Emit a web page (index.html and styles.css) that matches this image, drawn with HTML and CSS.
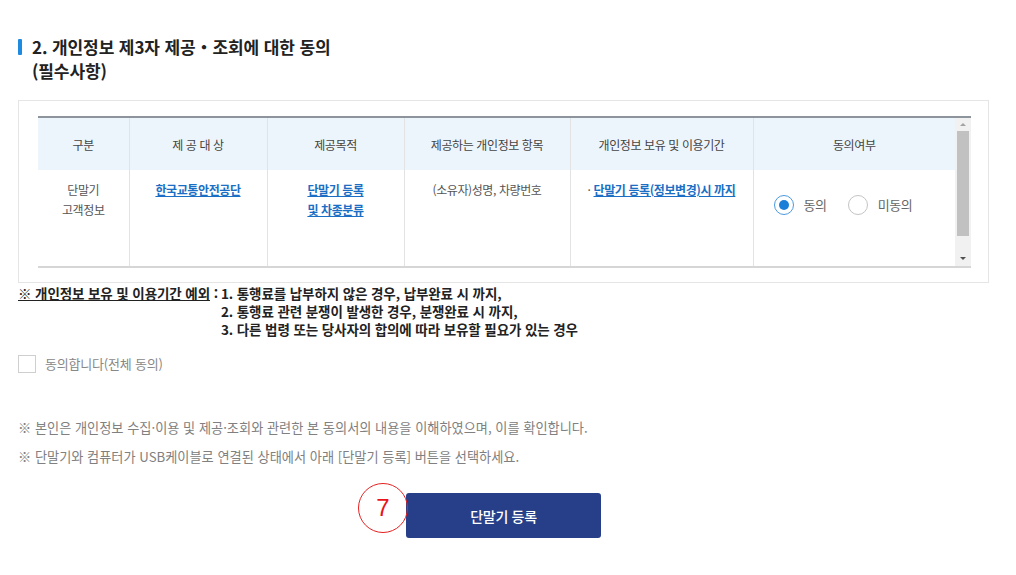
FILE: index.html
```html
<!doctype html>
<html lang="ko">
  <head>
    <meta charset="utf-8">
    <title>개인정보 제3자 제공 동의</title>
    <meta name="viewport" content="width=device-width, initial-scale=1">
    <link rel="stylesheet" href="styles.css">
  </head>
  <body>
    <div class="page">

      <h2 class="sec-title">
        <span class="sec-bar"></span>
        <span>2. 개인정보 제3자 제공・조회에 대한 동의<br>(필수사항)</span>
      </h2>

      <div class="agree-box">
        <div class="grid-wrap">
          <table class="agree-table">
            <colgroup>
              <col style="width: 91px">
              <col style="width: 138px">
              <col style="width: 137px">
              <col style="width: 166px">
              <col style="width: 183px">
              <col style="width: 202px">
            </colgroup>
            <thead>
              <tr>
                <th>구분</th>
                <th>제 공 대 상</th>
                <th>제공목적</th>
                <th>제공하는 개인정보 항목</th>
                <th>개인정보 보유 및 이용기간</th>
                <th>동의여부</th>
              </tr>
            </thead>
            <tbody>
              <tr>
                <td>단말기<br>고객정보</td>
                <td><a href="#" class="link">한국교통안전공단</a></td>
                <td><a href="#" class="link">단말기 등록<br>및 차종분류</a></td>
                <td>(소유자)성명, 차량번호</td>
                <td>· <a href="#" class="link">단말기 등록(정보변경)시 까지</a></td>
                <td class="radio-cell">
                  <div class="radio-group">
                    <span class="radio checked"></span><span class="radio-txt">동의</span>
                    <span class="radio"></span><span class="radio-txt">미동의</span>
                  </div>
                </td>
              </tr>
            </tbody>
          </table>
          <div class="scrollbar">
            <span class="arrow up"></span>
            <span class="thumb"></span>
            <span class="arrow down"></span>
          </div>
        </div>
      </div>

      <div class="except">
        <span class="except-tit"><u>※ 개인정보 보유 및 이용기간 예외</u> :</span>
        <span class="except-list">
          <span>1. 통행료를 납부하지 않은 경우, 납부완료 시 까지,</span>
          <span>2. 통행료 관련 분쟁이 발생한 경우, 분쟁완료 시 까지,</span>
          <span>3. 다른 법령 또는 당사자의 합의에 따라 보유할 필요가 있는 경우</span>
        </span>
      </div>

      <div class="all-agree">
        <span class="check"></span>
        <span>동의합니다(전체 동의)</span>
      </div>

      <ul class="notice">
        <li>※ 본인은 개인정보 수집·이용 및 제공·조회와 관련한 본 동의서의 내용을 이해하였으며, 이를 확인합니다.</li>
        <li>※ 단말기와 컴퓨터가 USB케이블로 연결된 상태에서 아래 [단말기 등록] 버튼을 선택하세요.</li>
      </ul>

      <div class="btn-area">
        <div class="btn-wrap">
          <button class="btn-reg">단말기 등록</button>
          <span class="mark">7</span>
        </div>
      </div>

    </div>
  </body>
</html>
```

FILE: styles.css
```css
body {
  margin: 0;
  padding: 0;
  background: #fff;
  font-family: "Noto Sans CJK KR", "Noto Sans", sans-serif;
  color: #333;
}
.page {
  padding: 35px 27px 0 18px;
}
.sec-title {
  display: flex;
  gap: 10px;
  margin: 0;
  font-size: 17px;
  line-height: 24px;
  font-weight: bold;
  color: #222;
  letter-spacing: -0.1px;
}
.sec-bar {
  flex: none;
  width: 4px;
  height: 16px;
  margin-top: 4px;
  border-radius: 1px;
  background-color: #1f8be0;
}
.agree-box {
  margin-top: 17px;
  border: 1px solid #e5e5e5;
  padding: 15px 17px 14px 19px;
}
.grid-wrap {
  display: flex;
  border-top: 2px solid #8e949c;
  border-bottom: 2px solid #d6d6d6;
  height: 148px;
}
.agree-table {
  flex: 1;
  border-collapse: collapse;
  table-layout: fixed;
  font-size: 12px;
  letter-spacing: -0.4px;
}
.agree-table th {
  height: 52px;
  padding: 0;
  background-color: #edf5fc;
  font-weight: normal;
  color: #444;
  border-left: 1px solid #e3e3e3;
}
.agree-table td {
  height: 96px;
  padding: 10px 4px 0;
  box-sizing: border-box;
  vertical-align: top;
  text-align: center;
  line-height: 20px;
  color: #555;
  border-left: 1px solid #e3e3e3;
}
.agree-table th:first-child,
.agree-table td:first-child {
  border-left: 0;
}
.link {
  color: #1a6fc4;
  font-weight: bold;
  text-decoration: underline;
}
.agree-table td.radio-cell {
  padding: 25px 0 0 20px;
  text-align: left;
}
.radio-group {
  display: flex;
  align-items: center;
  font-size: 13px;
  color: #666;
}
.radio {
  box-sizing: border-box;
  width: 20px;
  height: 20px;
  border: 1px solid #c4c4c4;
  border-radius: 50%;
  display: flex;
  align-items: center;
  justify-content: center;
}
.radio.checked {
  border-color: #4a9ae0;
}
.radio.checked::after {
  content: "";
  width: 10px;
  height: 10px;
  border-radius: 50%;
  background-color: #1a7fd6;
}
.radio-txt {
  margin-left: 10px;
  margin-right: 21px;
}
.scrollbar {
  flex: none;
  width: 16px;
  display: flex;
  flex-direction: column;
  align-items: center;
  background-color: #f1f1f1;
}
.arrow {
  width: 0;
  height: 0;
  border-left: 3px solid transparent;
  border-right: 3px solid transparent;
}
.arrow.up {
  margin: 5px 0 5px;
  border-bottom: 3px solid #a3a3a3;
}
.arrow.down {
  margin: auto 0 6px;
  border-top: 3px solid #505050;
}
.thumb {
  width: 12px;
  height: 105px;
  background-color: #c1c1c1;
}
.except {
  display: flex;
  margin-top: 1px;
  font-size: 13.5px;
  line-height: 18px;
  font-weight: bold;
  color: #222;
  letter-spacing: -0.1px;
}
.except-tit {
  flex: none;
  margin-right: 3px;
}
.except-list span {
  display: block;
}
.all-agree {
  display: flex;
  align-items: center;
  gap: 9px;
  margin-top: 16px;
  font-size: 13px;
  color: #888;
  letter-spacing: -0.2px;
}
.check {
  box-sizing: border-box;
  width: 18px;
  height: 18px;
  border: 1px solid #cfcfcf;
  background: #fff;
}
.notice {
  list-style: none;
  margin: 40px 0 0;
  padding: 0;
  font-size: 13.2px;
  line-height: 29px;
  color: #808080;
  letter-spacing: 0;
}
.btn-area {
  display: flex;
  justify-content: center;
  margin-top: 22px;
}
.btn-wrap {
  position: relative;
}
.btn-reg {
  width: 195px;
  height: 45px;
  border: 0;
  border-radius: 3px;
  background-color: #273f88;
  color: #fff;
  font-family: "Noto Sans CJK KR", sans-serif;
  font-size: 14px;
  font-weight: 500;
  letter-spacing: -0.3px;
  cursor: pointer;
}
.mark {
  position: absolute;
  left: -48px;
  top: -10px;
  width: 50px;
  height: 50px;
  box-sizing: border-box;
  border: 1px solid #e52020;
  border-radius: 50%;
  display: flex;
  align-items: center;
  justify-content: center;
  font-family: "Liberation Sans", Arial, sans-serif;
  font-size: 24px;
  color: #e8141a;
}
```
